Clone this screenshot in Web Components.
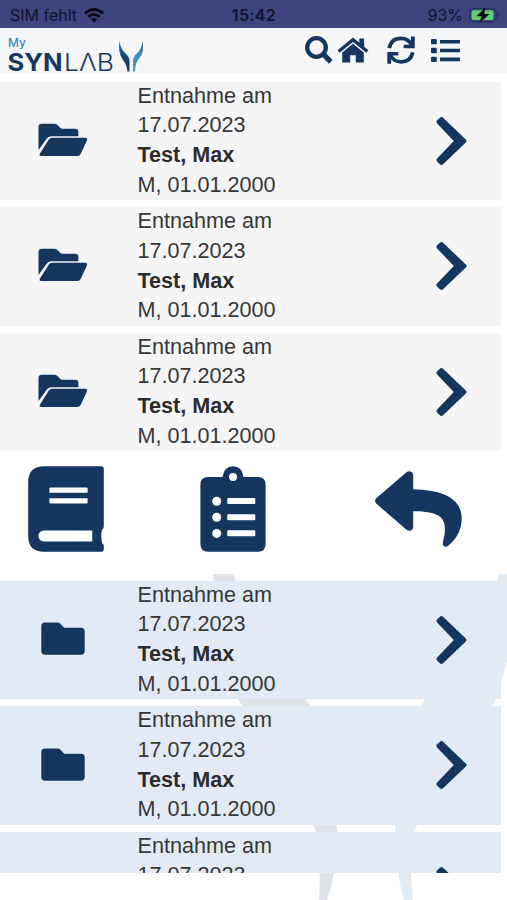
<!DOCTYPE html>
<html lang="de"><head><meta charset="utf-8"><title>My SYNLAB</title>
<style>
html,body{margin:0;height:100%;overflow:hidden;background:#fff}
body{font-family:"Liberation Sans",Arial,sans-serif;color:#353738}
</style></head><body>
<lab-app></lab-app>
<script>
const icons={
search:['0 0 28 28','<circle cx="11.5" cy="11.5" r="9.3" fill="none" stroke="currentColor" stroke-width="4.3"/><path d="M18.2 18.2L25.8 25.8" stroke="currentColor" stroke-width="5.2"/>'],
home:['0 0 32 28','<path d="M1.600 15L16 2.800L30.400 15" fill="none" stroke="currentColor" stroke-width="3.300"/><path d="M22.300 1.500h4.800v10.500l-4.800-3.700zM5.200 16L16 7l10.800 9V26.500h-8V19h-5.600v7.500h-8z"/>'],
sync:['0 0 28 28','<path d="M2.2 12.2C3.5 5.8 8 2.3 14 2.3c4.8 0 8.5 2.6 10.4 6.3M25.8 16.4C24.5 22.500 20 25.800 14 25.800c-4.800 0-8.500-2.600-10.400-6.300" fill="none" stroke="currentColor" stroke-width="3.800"/><path d="M27.800.500v11.700H16.600V8.800h7L24 .500zM.300 27.800V16h11v3.500H4.600l-.6 8.300z"/>'],
list:['0 0 29 24','<rect width="5.800" height="5.600" rx="1"/><rect y="9.200" width="5.800" height="5.600" rx="1"/><rect y="18.400" width="5.800" height="5.600" rx="1"/><path d="M9 1h20v3.800H9zm0 9.200h20v3.700H9zm0 9.200h20v3.700H9z"/>'],
open:['0 0 50 34','<path d="M.5 27V4Q.5.7 3.8.7h12.700q1.600 0 2.700 1.100l3 3q.9.9 2.300.9h12.700q3.200 0 3.200 3.300v4.300H13.700q-3.600 0-5.400 3z"/><path d="M10.800 16.600Q12 14.800 14 14.800h32.800q3.300 0 2 3l-6 13Q41.600 33 39.200 33H3.400Q.7 33 2 30.500z"/>'],
folder:['0 0 44 33','<path d="M.3 4Q.3.4 4 .4h12.500q1.600 0 2.700 1.100l3.300 3.400q.9.9 2.400.9H40q3.700 0 3.700 3.700V29q0 3.700-3.700 3.700H4Q.3 32.700.3 29z"/>'],
chevron:['0 0 30 50','<path d="M5.300 3.300L27.300 25L5.300 46.700L2.700 44.100L20.200 25L2.700 5.900z" stroke="currentColor" stroke-width="4.400" stroke-linejoin="round"/>'],
book:['0 0 76 86','<path fill-rule="evenodd" d="M16 .2h57q2.800 0 2.800 2.800v57.500q0 2.300-1.800 3.200-1.400 5.500.1 13.500 1.700.8 1.700 2.500v3.200q0 2.900-2.800 2.900H16Q.2 85.800.2 70V16Q.2.2 16 .2zM22.500 21.600q-1.100 0-1.100 1.100v4.100h38.200v-4.100q0-1.100-1.100-1.100zM21.400 32.200v4.200q0 1.100 1.100 1.100h36q1.100 0 1.100-1.100v-4.200zM16 64.500q-5.500.6-5.500 5.500t5.500 5.500h48.300v-11z"/>'],
clipboard:['0 0 66 86','<path fill-rule="evenodd" d="M8 11h14.500Q24 .2 33 .2T43.500 11H58q7.600 0 7.600 8v59q0 7.800-7.600 7.800H8Q.4 85.800.4 78V19q0-8 7.600-8zM33 7.100a4 4 0 1 0 0 8a4 4 0 1 0 0-8z"/><g fill="#fff"><circle cx="16.700" cy="35.200" r="4.500"/><circle cx="16.700" cy="51.300" r="4.500"/><circle cx="16.700" cy="67.400" r="4.500"/><rect x="27.300" y="32.100" width="28" height="6" rx="1"/><rect x="27.300" y="48.200" width="28" height="6" rx="1"/><rect x="27.300" y="64.300" width="28" height="6" rx="1"/></g>'],
reply:['0 0 87 77','<path d="M1.200 27.500L31.500 1.300Q34.500-.8 37 1.300q1.200 1 1.200 3v14.200c29 .8 48.500 8.500 48.500 30 0 11-5 20.500-13.500 27.200-3 2.200-6.200.3-5.300-3.500 1.800-6.700 2.600-13.500 1.500-18.500C67.500 43.500 56 40.800 38.200 40.700v15.800q0 2-1.200 3-2.500 1.900-5.500 0L1.200 33q-2.400-2.700 0-5.500z"/>']
};
class LabIcon extends HTMLElement{
 connectedCallback(){
  const [box,shape]=icons[this.getAttribute('name')];
  this.attachShadow({mode:'open'}).innerHTML=`<style>:host{display:block;flex:none;color:#15365f}svg{display:block;width:100%;height:100%;overflow:visible;fill:currentColor}</style><svg viewBox="${box}" preserveAspectRatio="none">${shape}</svg>`;
 }
}
customElements.define('lab-icon',LabIcon);

class StatusBar extends HTMLElement{
 connectedCallback(){
  this.attachShadow({mode:'open'}).innerHTML=`<style>
  :host{display:grid;grid-template-columns:1fr auto 1fr;align-items:center;height:28px;box-sizing:border-box;padding:2px 7px 0 10px;background:#3e447d;color:#11142c;font:16px/20px Inter,sans-serif}
  .l,.r{display:flex;align-items:center}.l{gap:7px}.r{justify-content:flex-end;gap:6px}
  b{font-weight:600;font-size:16px;letter-spacing:.35px;margin-left:-2px}svg{display:block}
  </style><div class="l"><span>SIM fehlt</span><svg width="20" height="15" viewBox="0 0 20 15"><g fill="none" stroke="#080a18" stroke-width="2.900"><path d="M1 5.400Q10-2.400 19 5.400"/><path d="M4.300 8.900Q10 4 15.700 8.900"/></g><path d="M6.800 11.100Q10 8.700 13.200 11.100L10 14.400z" fill="#080a18"/></svg></div><b>15:42</b><div class="r"><span>93%</span><svg width="31" height="17" viewBox="0 0 31 17"><rect x=".7" y="1.700" width="26.500" height="13" rx="4" fill="none" stroke="#292e59" stroke-width="1.300"/><rect x="2.500" y="3.300" width="22" height="9.800" rx="2.300" fill="#65cc71"/><path d="M28.800 6v4.500q1.700-.6 1.700-2.300T28.800 6z" fill="#292e59"/><path d="M16.500.6L7.500 9.300h5L10.600 16l10-9h-5.300z" fill="#080a18"/></svg></div>`;
 }
}
customElements.define('status-bar',StatusBar);

class SynlabLogo extends HTMLElement{
 connectedCallback(){
  this.attachShadow({mode:'open'}).innerHTML=`<style>:host{display:grid;grid-template:11px 27px/106px 32px;width:138px;height:38px;color:#153760}
  .my{font:500 12px/11px Inter,sans-serif;color:#408bb8;padding-top:1px}
  .name{display:flex;font:700 24px/26px Inter,sans-serif}
  .mark{grid-area:1/2/3/3}svg{display:block;overflow:visible}</style>
  <span class="my">My</span>
  <div class="name"><svg width="106" height="27"><g fill="#153760"><text x="-.5" y="24" textLength="55" lengthAdjust="spacingAndGlyphs">SYN</text><text x="56" y="24" font-weight="300" textLength="50" lengthAdjust="spacingAndGlyphs">LΛB</text></g></svg></div>
  <svg class="mark" width="32" height="38" viewBox="106 0 32 38"><defs><linearGradient id="a" x2="0" y2="1"><stop stop-color="#2e77a8"/><stop offset=".6" stop-color="#153b66"/></linearGradient><linearGradient id="b" x2="0" y2="1"><stop stop-color="#26527c"/><stop offset=".5" stop-color="#438fc0"/><stop offset="1" stop-color="#5598c3"/></linearGradient></defs><path d="M111.500 5Q109.500 16 115 24Q119 29 119.500 35.500H121.500V25Q121 20 117.500 17.500Q112.500 13 111.500 5z" fill="url(#a)"/><path d="M134.500 5Q136.500 16 131.500 22Q127 27 127 35.500H125V26Q125 20 129 17.500Q134 13 134.500 5z" fill="url(#b)"/></svg>`;
 }
}
customElements.define('synlab-logo',SynlabLogo);

class AppHeader extends HTMLElement{
 connectedCallback(){
  this.attachShadow({mode:'open'}).innerHTML=`<style>
  :host{display:flex;justify-content:space-between;height:46px;box-sizing:border-box;padding:8px 47px 0 8px;background:#f4f6f8}
  nav{display:flex;height:28px;align-items:center}
  .search{width:28px;height:28px}.home{width:32px;height:27px;margin-left:4.500px}.sync{width:28px;height:28px;margin-left:18px}.list{width:29px;height:23px;margin-left:16px}
  </style><synlab-logo></synlab-logo><nav><lab-icon class="search" name="search"></lab-icon><lab-icon class="home" name="home"></lab-icon><lab-icon class="sync" name="sync"></lab-icon><lab-icon class="list" name="list"></lab-icon></nav>`;
 }
}
customElements.define('app-header',AppHeader);

class ReportRow extends HTMLElement{
 connectedCallback(){
  const open=this.hasAttribute('open');
  this.attachShadow({mode:'open'}).innerHTML=`<style>
  :host{display:grid;grid-template-columns:137.500px 298.500px 1fr;align-items:center;flex:none;height:118.500px;width:500.500px;background:${open?'#f5f5f5':'#e2ebf5'};font-size:21.600px;line-height:29.700px}
  .icon{width:${open?50:44}px;height:${open?34:33}px;margin-left:${open?38:41}px;margin-top:-2px}
  .chevron{width:31px;height:50px}
  div{margin-top:-1.500px}p{margin:0;white-space:nowrap}b{color:#2c2c2e}
  </style><lab-icon class="icon" name="${open?'open':'folder'}"></lab-icon><div><p>Entnahme am</p><p>17.07.2023</p><p><b><slot></slot></b></p><p>M, 01.01.2000</p></div><lab-icon class="chevron" name="chevron"></lab-icon>`;
 }
}
customElements.define('report-row',ReportRow);

class ActionBar extends HTMLElement{
 connectedCallback(){
  this.attachShadow({mode:'open'}).innerHTML=`<style>
  :host{display:grid;grid-template-columns:200px 174.500px 1fr;height:129.500px;box-sizing:border-box;padding-top:15px}
  .book{width:76px;height:86px;margin-left:28px}.clipboard{width:66px;height:86px}.reply{width:87px;height:76px;margin-top:5px}
  </style><lab-icon class="book" name="book"></lab-icon><lab-icon class="clipboard" name="clipboard"></lab-icon><lab-icon class="reply" name="reply"></lab-icon>`;
 }
}
customElements.define('action-bar',ActionBar);

class BrandMark extends HTMLElement{
 connectedCallback(){
  this.attachShadow({mode:'open'}).innerHTML=`<style>:host{display:block}svg{display:block}</style><svg width="307" height="327" viewBox="200 573 307 327"><path fill="#dfe2e6" d="M213 574h19q3 2 4 8Q252 640 311 706Q330 760 337 828Q338 870 327 900H319Q322 850 313 824Q300 775 238 700Q220 650 213 574z"/><path fill="#e0ebf3" d="M499 574h8V662Q503 672 500 690L493 704Q438 770 413 835Q409 870 413 900H404Q397 880 395 824Q395 755 421 706L425 699Q475 645 497 580z"/></svg>`;
 }
}
customElements.define('brand-mark',BrandMark);

class LabApp extends HTMLElement{
 connectedCallback(){
  this.attachShadow({mode:'open'}).innerHTML=`<style>
  :host{display:block;position:relative;width:507px;height:900px;overflow:hidden}
  brand-mark{position:absolute;right:0;bottom:0}
  main{position:relative;height:900px}
  .list{display:flex;flex-direction:column;gap:7px}.first{padding-top:7.500px}.second{height:292.500px;overflow:hidden}
  </style><brand-mark></brand-mark><main><status-bar></status-bar><app-header></app-header>
  <section class="list first">${'<report-row open>Test, Max</report-row>'.repeat(3)}</section><action-bar></action-bar>
  <section class="list second">${'<report-row>Test, Max</report-row>'.repeat(3)}</section></main>`;
 }
}
customElements.define('lab-app',LabApp);
</script></body></html>
